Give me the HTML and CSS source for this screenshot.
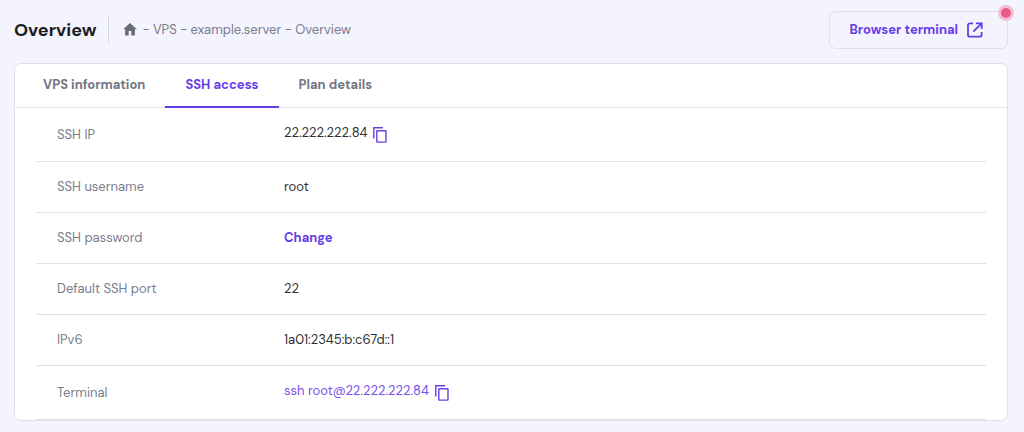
FILE: index.html
```html
<!DOCTYPE html>
<html lang="en">
<head>
<meta charset="utf-8">
<meta name="viewport" content="width=device-width, initial-scale=1">
<title>Overview</title>
<link rel="stylesheet" href="styles.css">
</head>
<body>
<header class="page-header">
  <h1 class="title">Overview</h1>
  <nav class="breadcrumb" aria-label="Breadcrumb">
    <a class="home" href="#" aria-label="Home"><svg width="16" height="14" viewBox="0 0 16 14"><path fill="currentColor" d="M8 0 14.8 6.2H12.9V12.4H9.3V8H6.7V12.4H3.1V6.2H1.2Z"/></svg></a>
    <span class="trail">- VPS - example.server - Overview</span>
  </nav>
  <button class="terminal-button" type="button">
    <span>Browser terminal</span>
    <svg width="16" height="16" viewBox="0 0 16 16" fill="none" stroke="currentColor" stroke-width="1.8"><path d="M6 1.3H3A2 2 0 0 0 1 3.3V12.7A2 2 0 0 0 3 14.7H12.6A2 2 0 0 0 14.6 12.7V10M9 1.3H14.7V7M14.4 1.6 6.3 9.7"/></svg>
    <span class="dot"></span>
  </button>
</header>
<main class="card">
  <div class="tabs" role="tablist">
    <button class="tab" type="button" role="tab">VPS information</button>
    <button class="tab active" type="button" role="tab" aria-selected="true">SSH access</button>
    <button class="tab" type="button" role="tab">Plan details</button>
  </div>
  <div class="panel">
    <table class="details">
      <tr class="tall"><th scope="row">SSH IP</th><td><div class="value"><span class="text">22.222.222.84</span><button class="copy" type="button" aria-label="Copy SSH IP"><svg width="14" height="16" viewBox="0 0 14 16" fill="none" stroke="currentColor" stroke-width="1.4"><path d="M0.8 11.5V0.8H10"/><rect x="3.8" y="3.7" width="9.2" height="11.4" rx="0.6"/></svg></button></div></td></tr>
      <tr><th scope="row">SSH username</th><td>root</td></tr>
      <tr><th scope="row">SSH password</th><td><a class="change" href="#">Change</a></td></tr>
      <tr><th scope="row">Default SSH port</th><td>22</td></tr>
      <tr><th scope="row">IPv6</th><td>1a01:2345:b:c67d::1</td></tr>
      <tr class="tall"><th scope="row">Terminal</th><td><div class="value command"><span class="text">ssh root@22.222.222.84</span><button class="copy" type="button" aria-label="Copy terminal command"><svg width="14" height="16" viewBox="0 0 14 16" fill="none" stroke="currentColor" stroke-width="1.4"><path d="M0.8 11.5V0.8H10"/><rect x="3.8" y="3.7" width="9.2" height="11.4" rx="0.6"/></svg></button></div></td></tr>
    </table>
  </div>
</main>
</body>
</html>
```
FILE: styles.css
```css
* { box-sizing: border-box; }
body {
  margin: 0;
  padding: 11px 16px 12px 14px;
  background: #f4f4ff;
  color: #2f2f33;
  font: 13px/20px "DM Sans", Inter, sans-serif;
}
button {
  border: 0;
  padding: 0;
  background: none;
  color: inherit;
  font: inherit;
  cursor: pointer;
}
a { color: inherit; text-decoration: none; }
svg { display: block; flex: none; }

.page-header {
  display: flex;
  align-items: center;
  margin-bottom: 14px;
}
.title {
  margin: 0;
  padding-right: 12px;
  border-right: 1px solid #d8d9e4;
  color: #1d1e20;
  font-size: 18px;
  line-height: 28px;
  font-weight: 700;
}
.breadcrumb {
  display: flex;
  align-items: center;
  gap: 4px;
  padding-left: 13px;
  color: #7a7b8b;
}
.home { color: #6b6c7b; }
.terminal-button {
  position: relative;
  display: flex;
  align-items: center;
  gap: 9px;
  margin-left: auto;
  padding: 8px 24px 8px 20px;
  border: 1px solid #dfe0ea;
  border-radius: 7px;
  color: #673de6;
  font-weight: 700;
}
.dot {
  position: absolute;
  top: -7px;
  right: -7px;
  width: 16px;
  height: 16px;
  border: 3px solid #f5bfd3;
  border-radius: 50%;
  background: #ea5b87;
}

.card {
  border: 1px solid #dfe0e8;
  border-radius: 7px;
  background: #fff;
}
.tabs {
  display: flex;
  padding-left: 8px;
  border-bottom: 1px solid #e3e4ea;
}
.tab {
  margin-bottom: -1px;
  padding: 11px 20px;
  border-bottom: 2px solid transparent;
  color: #727586;
  font-weight: 700;
}
.active { color: #673de6; border-color: #673de6; }

.panel { padding: 0 21px; }
.details {
  width: 100%;
  border-collapse: separate;
  border-spacing: 0;
}
.details th, .details td {
  height: 51px;
  padding: 0;
  border-bottom: 1px solid #dfe0e6;
  text-align: left;
  vertical-align: middle;
}
.details th {
  width: 248px;
  padding-left: 21px;
  color: #7b7d8e;
  font-weight: 400;
}
.details .tall th, .details .tall td { height: 54px; }
.value { display: flex; align-items: center; gap: 6px; }
.value .text { padding-bottom: 3px; }
.copy { color: #673de6; }
.command { color: #7652e8; }
.change { color: #673de6; font-weight: 700; }
```
